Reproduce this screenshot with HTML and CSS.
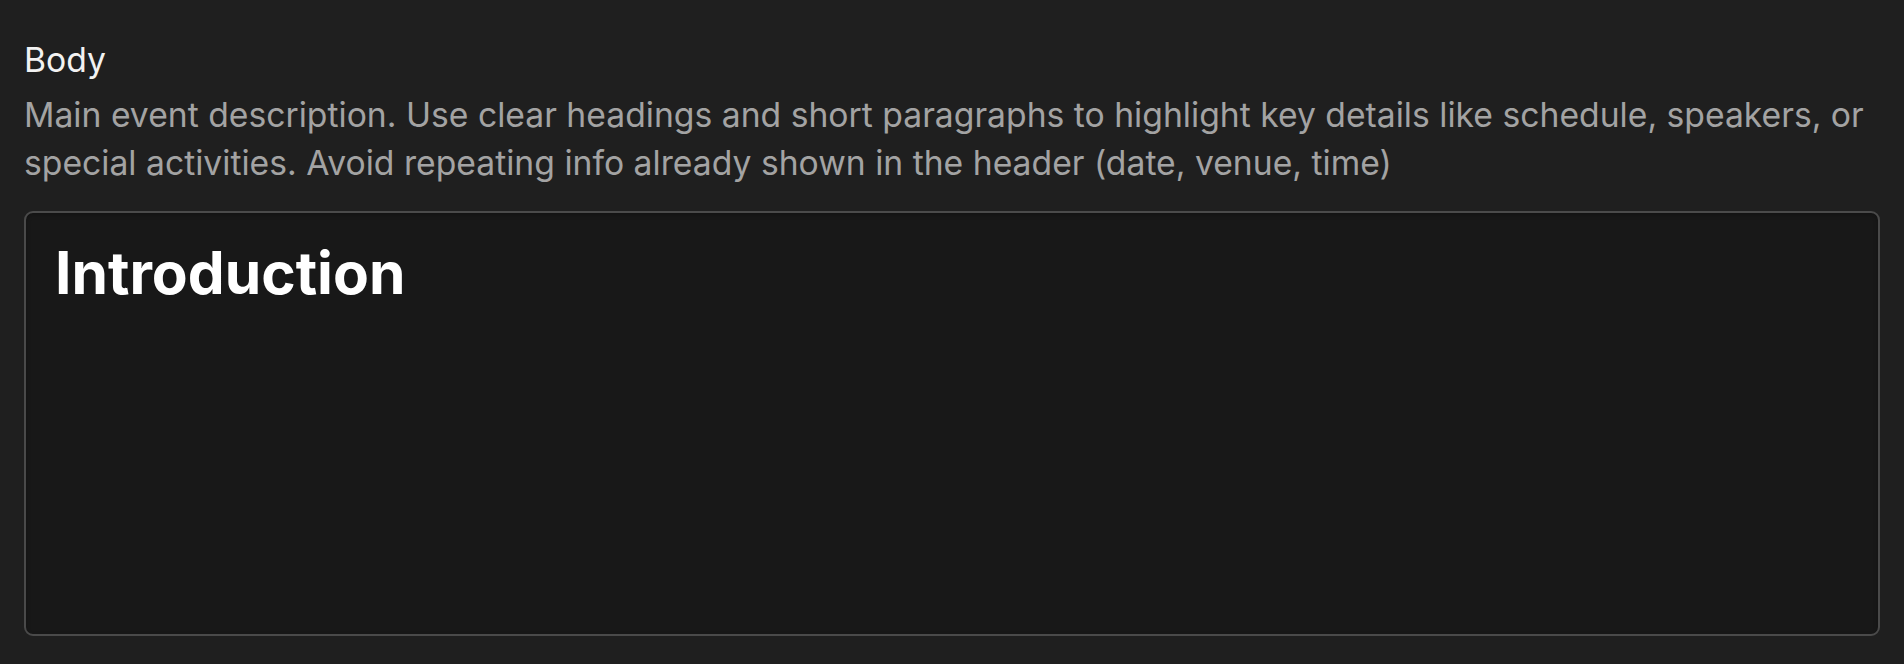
FILE: index.html
```html
<!DOCTYPE html>
<html lang="en">
<head>
<meta charset="utf-8">
<title>Body field</title>
<link rel="stylesheet" href="styles.css">
</head>
<body>
<div class="field">
  <label class="label">Body</label>
  <p class="hint">Main event description. Use clear headings and short paragraphs to highlight key details like schedule, speakers, or special activities. Avoid repeating info already shown in the header (date, venue, time)</p>
  <div class="editor">
    <h1 class="editor-heading">Introduction</h1>
  </div>
</div>
</body>
</html>
```

FILE: styles.css
```css
html, body {
  margin: 0;
  padding: 0;
  background: #1f1f1f;
  font-family: Inter, "Noto Sans", sans-serif;
}

.field {
  padding: 38px 24px 0 24px;
  display: flex;
  flex-direction: column;
}

.label {
  display: block;
  color: #f2f2f2;
  font-size: 33.7px;
  line-height: 44px;
}

.hint {
  margin: 9px 0 0 0;
  color: #a3a3a3;
  font-size: 33.7px;
  line-height: 48px;
}

.editor {
  margin-top: 24px;
  height: 425px;
  box-sizing: border-box;
  border: 2px solid #4a4a4a;
  border-radius: 9px;
  background: #181818;
  box-shadow: inset 0 2px 4px rgba(0, 0, 0, 0.25);
  padding: 26px 29px;
}

.editor-heading {
  margin: 0;
  color: #ffffff;
  font-size: 58.6px;
  font-weight: 700;
  line-height: 68px;
}
```
